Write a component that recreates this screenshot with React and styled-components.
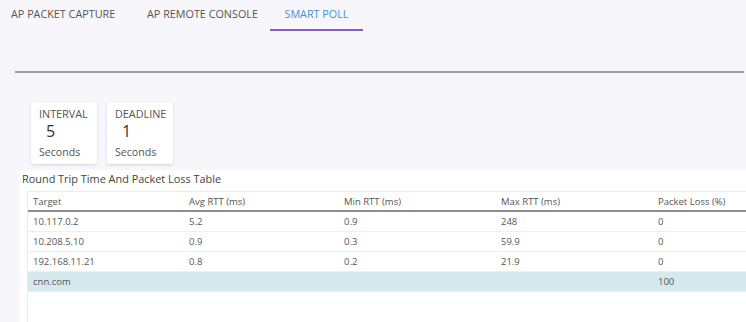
import React from 'react'
import styled, { createGlobalStyle } from 'styled-components'

const GlobalStyle = createGlobalStyle`
  html, body {
    margin: 0;
    padding: 0;
    background-color: #f7f7fb;
    overflow: hidden;
  }
  body {
    font-family: "Open Sans", "Liberation Sans", sans-serif;
    color: #555;
  }
`;

const Page = styled.div`
  width: 746px;
  height: 322px;
  display: flex;
  flex-direction: column;
  background-color: #f7f7fb;
`;

const TabBar = styled.div`
  display: flex;
  height: 31px;
`;

const Tab = styled.div`
  display: flex;
  align-items: center;
  box-sizing: border-box;
  width: ${p => p.w}px;
  padding-left: ${p => p.pl}px;
  justify-content: ${p => (p.active ? 'center' : 'flex-start')};
  font-size: 10.8px;
  text-transform: uppercase;
  color: ${p => (p.active ? '#4a90d9' : '#555')};
  border-bottom: 2px solid ${p => (p.active ? '#8a5ac8' : 'transparent')};
  height: 31px;
  padding-bottom: 2px;
`;

const Divider = styled.div`
  margin: 40px 2px 0 15px;
  border-top: 2px solid #9d9d9d;
`;

const Cards = styled.div`
  display: flex;
  gap: 10px;
  margin: 29px 0 0 31px;
`;

const Card = styled.div`
  width: 66px;
  height: 62px;
  box-sizing: border-box;
  padding: 5px 0 0 8px;
  background: #fff;
  border-radius: 2px;
  box-shadow: 0 1px 3px rgba(0, 0, 0, 0.14);
  display: flex;
  flex-direction: column;
`;

const CardLabel = styled.div`
  font-size: 10.8px;
  line-height: 14px;
  text-transform: uppercase;
  color: #555;
`;

const CardValue = styled.div`
  font-size: 16px;
  line-height: 20px;
  color: #333;
  padding-left: 7px;
`;

const CardUnit = styled.div`
  font-size: 10.6px;
  line-height: 14px;
  margin-top: 4px;
  color: #555;
`;

const Panel = styled.div`
  flex: 1;
  margin: 6px 0 0 20px;
  background: #fff;
  display: flex;
  flex-direction: column;
  min-height: 0;
`;

const PanelTitle = styled.div`
  height: 21px;
  line-height: 18px;
  padding-left: 2px;
  font-size: 10.9px;
  color: #444;
`;

const TableWrap = styled.div`
  flex: 1;
  margin-left: 7px;
  border-left: 1px solid #ececec;
  border-top: 1px solid #ececec;
  overflow: hidden;
`;

const Table = styled.table`
  border-collapse: collapse;
  table-layout: fixed;
  width: 785px;
  font-size: 9.5px;
`;

const Col = styled.col`
  width: ${p => p.w}px;
`;

const Th = styled.th`
  height: 18px;
  text-align: left;
  font-weight: normal;
  padding: 0 0 0 5px;
  color: #555;
  border-bottom: 2px solid #8f8f8f;
`;

const Row = styled.tr`
  background: ${p => (p.highlight ? '#d5e9ee' : '#fff')};
`;

const Td = styled.td`
  height: 19px;
  padding: 0 0 0 5px;
  color: #555;
  border-bottom: 1px solid #efefef;
`;

const columns = [
  { title: 'Target', w: 156 },
  { title: 'Avg RTT (ms)', w: 155 },
  { title: 'Min RTT (ms)', w: 157 },
  { title: 'Max RTT (ms)', w: 157 },
  { title: 'Packet Loss (%)', w: 160 },
];

const rows = [
  ['10.117.0.2', '5.2', '0.9', '248', '0'],
  ['10.208.5.10', '0.9', '0.3', '59.9', '0'],
  ['192.168.11.21', '0.8', '0.2', '21.9', '0'],
  ['cnn.com', '', '', '', '100'],
];

const App = () => {
  return (
    <Page>
      <GlobalStyle />
      <TabBar>
        <Tab w={132} pl={11}>AP Packet Capture</Tab>
        <Tab w={138} pl={15}>AP Remote Console</Tab>
        <Tab w={93} active>Smart Poll</Tab>
      </TabBar>
      <Divider />
      <Cards>
        <Card>
          <CardLabel>Interval</CardLabel>
          <CardValue>5</CardValue>
          <CardUnit>Seconds</CardUnit>
        </Card>
        <Card>
          <CardLabel>Deadline</CardLabel>
          <CardValue>1</CardValue>
          <CardUnit>Seconds</CardUnit>
        </Card>
      </Cards>
      <Panel>
        <PanelTitle>Round Trip Time And Packet Loss Table</PanelTitle>
        <TableWrap>
          <Table>
            <colgroup>
              {columns.map(c => <Col key={c.title} w={c.w} />)}
            </colgroup>
            <thead>
              <tr>
                {columns.map(c => <Th key={c.title}>{c.title}</Th>)}
              </tr>
            </thead>
            <tbody>
              {rows.map((r, i) => (
                <Row key={i} highlight={r[4] === '100'}>
                  {r.map((cell, j) => <Td key={j}>{cell}</Td>)}
                </Row>
              ))}
            </tbody>
          </Table>
        </TableWrap>
      </Panel>
    </Page>
  );
};

export default App;
